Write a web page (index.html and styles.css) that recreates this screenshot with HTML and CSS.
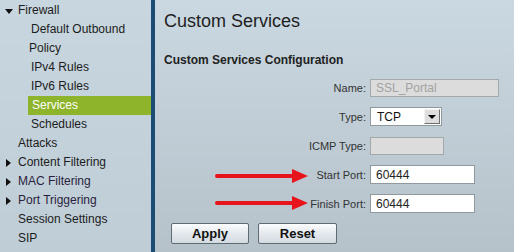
FILE: index.html
```html
<!DOCTYPE html>
<html lang="en">
<head>
    <meta charset="UTF-8">
    <title>Custom Services</title>
    <link rel="stylesheet" href="styles.css">
</head>
<body>
    <div class="page">
        <ul class="nav">
            <li class="nav-item open"><span class="caret"></span>Firewall</li>
            <li class="sub">Default Outbound</li>
            <li class="sub policy">Policy</li>
            <li class="sub">IPv4 Rules</li>
            <li class="sub">IPv6 Rules</li>
            <li class="sub active">Services</li>
            <li class="sub">Schedules</li>
            <li class="nav-item">Attacks</li>
            <li class="nav-item closed"><span class="caret"></span>Content Filtering</li>
            <li class="nav-item closed visited"><span class="caret"></span>MAC Filtering</li>
            <li class="nav-item closed visited"><span class="caret"></span>Port Triggering</li>
            <li class="nav-item">Session Settings</li>
            <li class="nav-item">SIP</li>
        </ul>
        <div class="content">
            <h1>Custom Services</h1>
            <h2>Custom Services Configuration</h2>
            <div class="form">
                <label>Name:</label>
                <div class="field"><input class="input name" type="text" value="SSL_Portal" disabled></div>
                <label>Type:</label>
                <div class="field">
                    <div class="select"><span>TCP</span><span class="drop"></span></div>
                </div>
                <label>ICMP Type:</label>
                <div class="field"><input class="input icmp" type="text" disabled></div>
                <label>Start Port:</label>
                <div class="field"><input class="input port" type="text" value="60444"></div>
                <label>Finish Port:</label>
                <div class="field"><input class="input port" type="text" value="60444"></div>

                <svg class="arrow start" width="94" height="16" viewBox="0 0 94 16">
                    <line x1="2" y1="8" x2="80" y2="8" stroke="#e8141c" stroke-width="4" stroke-linecap="round"/>
                    <polygon points="77,1 93,8 77,15" fill="#e8141c"/>
                </svg>
                <svg class="arrow finish" width="94" height="16" viewBox="0 0 94 16">
                    <line x1="2" y1="8" x2="80" y2="8" stroke="#e8141c" stroke-width="4" stroke-linecap="round"/>
                    <polygon points="77,1 93,8 77,15" fill="#e8141c"/>
                </svg>
            </div>
            <div class="buttons">
                <button class="btn apply">Apply</button>
                <button class="btn reset">Reset</button>
            </div>
        </div>
    </div>
</body>
</html>
```

FILE: styles.css
```css
body {
    margin: 0;
    font-family: "Liberation Sans", Arial, sans-serif;
    overflow: hidden;
}

.page {
    display: flex;
    width: 514px;
    height: 252px;
}

.nav {
    list-style: none;
    margin: 0;
    padding: 1px 0 0;
    width: 151px;
    flex: none;
    background: linear-gradient(#c8d6df, #bfcdd6);
    border-right: 4px solid #1b4c74;
    font-size: 12px;
    color: #1c1c1c;
}

.nav li {
    height: 19px;
    line-height: 19px;
    white-space: nowrap;
}

.nav-item {
    position: relative;
    padding-left: 18px;
}

.visited {
    color: #2a1f3c;
}

.caret {
    position: absolute;
    width: 0;
    height: 0;
}

.open .caret {
    left: 5px;
    top: 8px;
    border-left: 4px solid transparent;
    border-right: 4px solid transparent;
    border-top: 5px solid #111;
}

.closed .caret {
    left: 6px;
    top: 6px;
    border-top: 4px solid transparent;
    border-bottom: 4px solid transparent;
    border-left: 5px solid #111;
}

.sub {
    margin-left: 28px;
    padding-left: 3px;
}

.sub.policy {
    padding-left: 1px;
}

.sub.active {
    background: #8db42b;
    color: #fff;
    padding-left: 4px;
}

.content {
    flex: 1;
    padding: 10px 0 0 9px;
    background: linear-gradient(#cad8e1, #b6c2ca);
    color: #222;
}

h1 {
    margin: 0;
    font-size: 18px;
    line-height: 22px;
    font-weight: normal;
    color: #1e1e1e;
}

h2 {
    margin: 21px 0 0;
    font-size: 12px;
    line-height: 15px;
    color: #222;
}

.form {
    position: relative;
    display: grid;
    grid-template-columns: 202px auto;
    grid-auto-rows: 19px;
    column-gap: 4px;
    row-gap: 10px;
    align-items: center;
    margin-top: 10px;
}

.form label {
    text-align: right;
    font-size: 11px;
    color: #333;
}

.field {
    display: flex;
    align-items: center;
    height: 19px;
}

.input {
    box-sizing: border-box;
    height: 19px;
    margin: 0;
    padding: 0 5px;
    border: 1px solid #8f999f;
    background: #fff;
    font-family: "Liberation Sans", Arial, sans-serif;
    font-size: 12px;
    color: #222;
    outline: none;
}

.input:disabled {
    background: #dcdcdc;
    border-color: #a3a8ab;
    color: #a2a2a2;
}

.name {
    width: 129px;
    height: 18px;
}

.icmp {
    width: 74px;
    height: 18px;
}

.port {
    width: 105px;
}

.select {
    box-sizing: border-box;
    display: flex;
    align-items: center;
    justify-content: space-between;
    width: 72px;
    height: 19px;
    padding: 0 1px 0 6px;
    background: #fff;
    border: 1px solid #8f999f;
    font-size: 12px;
    color: #111;
}

.drop {
    position: relative;
    box-sizing: border-box;
    width: 16px;
    height: 15px;
    background: #dedede;
    border: 1px solid;
    border-color: #f4f4f4 #707070 #707070 #f4f4f4;
}

.drop::after {
    content: "";
    position: absolute;
    left: 3px;
    top: 5px;
    border-left: 4px solid transparent;
    border-right: 4px solid transparent;
    border-top: 4px solid #000;
}

.arrow {
    position: absolute;
    left: 51px;
}

.arrow.start {
    top: 90px;
}

.arrow.finish {
    top: 117px;
}

.buttons {
    display: flex;
    gap: 9px;
    margin: 10px 0 0 7px;
}

.btn {
    box-sizing: border-box;
    height: 21px;
    padding: 0;
    border: 1px solid #5f6b74;
    border-radius: 2px;
    background: linear-gradient(#fbfcfd, #e4e9ed 50%, #d3dbe1);
    font-family: "Liberation Sans", Arial, sans-serif;
    font-size: 13px;
    font-weight: bold;
    color: #111;
}

.apply {
    width: 78px;
}

.reset {
    width: 79px;
}
```
